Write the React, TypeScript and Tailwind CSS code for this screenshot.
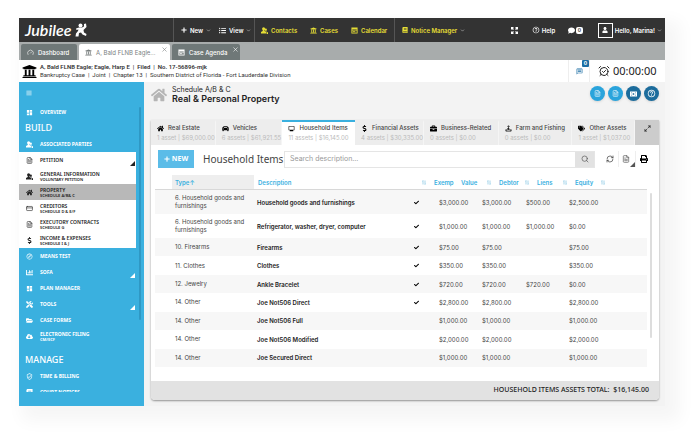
import React from "react";

import clsx from "clsx";
import {
  FaBars,
  FaBook,
  FaBriefcase,
  FaCalendarAlt,
  FaCar,
  FaCheck,
  FaChartBar,
  FaCloudDownloadAlt,
  FaComment,
  FaDollarSign,
  FaFolderOpen,
  FaHome,
  FaListUl,
  FaPlus,
  FaPrint,
  FaTags,
  FaTools,
  FaUniversity,
  FaUser,
  FaUserFriends,
} from "react-icons/fa";
import {
  MdDashboard,
  MdOutlineExplore,
  MdOutlineHelpOutline,
  MdOutlineMessage,
  MdOutlineMonitor,
  MdOutlineVerifiedUser,
} from "react-icons/md";
import {
  AlarmClockCheck,
  ChevronDown,
  CreditCard,
  FileText,
  Gauge,
  Maximize2,
  RefreshCw,
  Search,
  X,
} from "lucide-react";

type Icon = React.ComponentType<{ className?: string }>;

type NavItem = {
  label: string;
  sub?: string;
  icon: Icon;
  more?: boolean;
  active?: boolean;
};

const Corner = () => (
  <svg viewBox="0 0 5 5" className="size-[5px]" fill="currentColor">
    <path d="M5 0v5H0z" />
  </svg>
);

// two people, the front one larger
const People = ({ className }: { className?: string }) => (
  <svg viewBox="0 0 16 16" className={className} fill="currentColor">
    <circle cx="6" cy="4" r="3.500" />
    <path d="M4 6h4v3l4 2.500V15H0v-3.500L4 9z" />
    <circle cx="11" cy="6" r="2.500" />
    <path d="M10 8h2.500v2.500L16 12.500V16h-3v-5l-3-1.500z" />
  </svg>
);

const Agenda = ({ className }: { className?: string }) => (
  <svg viewBox="0 0 16 16" className={className} fill="currentColor">
    <path fillRule="evenodd" d="M1 1h14v14H1zM3 5v1.500h10V5zM3 8v5h10V8z" />
    <path d="M4 9h5v1.200H4zM4 11h7v1.200H4z" />
  </svg>
);

const Sprout = ({ className }: { className?: string }) => (
  <svg viewBox="0 0 16 16" className={className} fill="none" stroke="currentColor" strokeWidth="1.500">
    <path d="M8 2v9M5.500 4 8 1.500 10.500 4M5 8h5M2 10v4h12v-4M2 12c3-2 9-2 12 0" />
  </svg>
);

const buildTop: NavItem[] = [{ label: "ASSOCIATED PARTIES", icon: People }];

const petition: NavItem[] = [
  { label: "PETITION", icon: FileText, more: true },
  { label: "GENERAL INFORMATION", sub: "VOLUNTARY PETITION", icon: People },
  { label: "PROPERTY", sub: "SCHEDULE A/B& C", icon: FaHome, active: true },
  { label: "CREDITORS", sub: "SCHEDULE D & E/F", icon: CreditCard },
  { label: "EXECUTORY CONTRACTS", sub: "SCHEDULE G", icon: FileText },
  { label: "INCOME & EXPENSES", sub: "SCHEDULE I & J", icon: FaDollarSign },
];

const buildBottom: NavItem[] = [
  { label: "MEANS TEST", icon: MdOutlineExplore },
  { label: "SOFA", icon: FaChartBar, more: true },
  { label: "PLAN MANAGER", icon: MdDashboard },
  { label: "TOOLS", icon: FaTools, more: true },
  { label: "CASE FORMS", icon: FaFolderOpen },
  { label: "ELECTRONIC FILING", sub: "CM/ECF", icon: FaCloudDownloadAlt },
];

const manage: NavItem[] = [
  { label: "TIME & BILLING", icon: MdOutlineVerifiedUser },
  { label: "COURT NOTICES", icon: FaBook },
];

const assetTabs: { label: string; info: string; icon: Icon; active?: boolean }[] = [
  { label: "Real Estate", info: "1 asset | $69,000.00", icon: FaHome },
  { label: "Vehicles", info: "6 assets | $61,921.55", icon: FaCar },
  { label: "Household Items", info: "11 assets | $16,145.00", icon: MdOutlineMonitor, active: true },
  { label: "Financial Assets", info: "4 assets | $30,335.00", icon: FaDollarSign },
  { label: "Business-Related", info: "0 assets | $0.00", icon: FaBriefcase },
  { label: "Farm and Fishing", info: "0 assets | $0.00", icon: Sprout },
  { label: "Other Assets", info: "1 asset | $1,037.00", icon: FaTags },
];

const rows = [
  { type: "6. Household goods and furnishings", desc: "Household goods and furnishings", exempt: true, values: ["$3,000.00", "$3,000.00", "$500.00", "$2,500.00"] },
  { type: "6. Household goods and furnishings", desc: "Refrigerator, washer, dryer, computer", exempt: true, values: ["$1,000.00", "$1,000.00", "$1,000.00", "$0.00"] },
  { type: "10. Firearms", desc: "Firearms", exempt: true, values: ["$75.00", "$75.00", "", "$75.00"] },
  { type: "11. Clothes", desc: "Clothes", exempt: true, values: ["$350.00", "$350.00", "", "$350.00"] },
  { type: "12. Jewelry", desc: "Ankle Bracelet", exempt: true, values: ["$720.00", "$720.00", "$720.00", "$0.00"] },
  { type: "14. Other", desc: "Joe Not506 Direct", exempt: true, values: ["$2,800.00", "$2,800.00", "", "$2,800.00"] },
  { type: "14. Other", desc: "Joe Not506 Full", exempt: false, values: ["$1,000.00", "$1,000.00", "", "$1,000.00"] },
  { type: "14. Other", desc: "Joe Not506 Modified", exempt: false, values: ["$2,000.00", "$2,000.00", "", "$2,000.00"] },
  { type: "14. Other", desc: "Joe Secured Direct", exempt: false, values: ["$1,000.00", "$1,000.00", "", "$1,000.00"] },
];

const Logo = () => (
  <a href="#" className="flex w-[154px] items-center gap-1 pl-[6px] text-white">
    <span className="font-['Lato'] text-[16px] leading-none font-semibold italic">Jubilee</span>
    <svg viewBox="0 0 24 28" className="h-[14px] w-[12px]" fill="currentColor">
      <circle cx="11" cy="5" r="4" />
      <path d="M8 9h6l4-2V2l4-1 1 7-6 6 1 5 5 3-1 4-7-3-3-4-4 1-1 7H1l1-6 4-5 1-3-4 1-1-3z" />
    </svg>
  </a>
);

const TopBar = () => (
  <header className="flex h-6 items-stretch bg-[#333333] text-[6px] font-semibold text-white">
    <Logo />
    <nav className="flex items-stretch">
      <div className="flex items-center border-l border-[#555555]">
        <button className="flex w-[43px] items-center gap-[3px] pl-[7px]">
          <FaPlus className="size-[6px]" /> New <ChevronDown className="size-[5px]" />
        </button>
        <button className="flex w-[37px] items-center gap-[3px] pl-[2px]">
          <FaListUl className="size-[7px]" /> View <ChevronDown className="size-[5px]" />
        </button>
      </div>
      <div className="flex items-center border-l border-[#555555] text-[#e6de35]">
        <a href="#" className="flex w-[49px] items-center gap-[3px] pl-[6px]">
          <People className="size-[7px]" /> Contacts
        </a>
        <a href="#" className="flex w-[41px] items-center gap-[3px] pl-[6px]">
          <FaUniversity className="size-[7px]" /> Cases
        </a>
        <a href="#" className="flex w-[49px] items-center gap-[3px] pl-[6px]">
          <Agenda className="size-[7px]" /> Calendar
        </a>
      </div>
      <div className="flex items-center border-l border-[#555555] text-[#e6de35]">
        <button className="flex items-center gap-[3px] pl-[7px]">
          <FaBook className="size-[6px]" /> Notice Manager
          <ChevronDown className="size-[5px] text-white" />
        </button>
      </div>
    </nav>
    <div className="ml-auto flex items-center pr-[3px]">
      <button className="w-[21px]" aria-label="Full screen">
        <svg viewBox="0 0 14 14" className="size-[7px]" fill="none" stroke="currentColor" strokeWidth="2.400">
          <path d="M1 5V1h4M9 1h4v4M13 9v4H9M5 13H1V9M5 5 1 1M9 5l4-4M9 9l4 4M5 9l-4 4" />
        </svg>
      </button>
      <button className="flex w-9 items-center gap-[2px]">
        <MdOutlineHelpOutline className="size-[8px]" /> Help
      </button>
      <button className="flex w-[30px] items-center gap-[1px]" aria-label="Messages">
        <FaComment className="size-[7px]" />
        <span className="rounded-[2px] bg-white px-[2px] text-[5px] leading-[7px] text-[#333333]">0</span>
      </button>
      <button className="flex items-center gap-[2px]">
        <span className="flex size-[15px] items-center justify-center border border-white">
          <FaUser className="size-[6px]" />
        </span>
        Hello, Marina!
        <ChevronDown className="size-[5px]" />
      </button>
    </div>
  </header>
);

const CaseTabs = () => (
  <nav className="flex h-[18px] items-end gap-[2px] bg-[#a8acac] px-[2px] text-[6px] whitespace-nowrap text-white">
    <a href="#" className="flex h-4 w-14 items-center gap-1 rounded-t-[2px] bg-[#6f7878] pl-[6px] font-medium">
      <Gauge className="size-[7px]" /> Dashboard
    </a>
    <a href="#" className="flex h-4 w-[91px] items-center gap-1 rounded-t-[2px] bg-white pl-[6px] text-[#7a8080]">
      <FaUniversity className="size-[7px]" /> A, Bald FLNB Eagle...
      <X className="mr-[2px] mb-[5px] ml-auto size-[7px]" />
    </a>
    <a href="#" className="flex h-4 w-[68px] items-center gap-1 rounded-t-[2px] bg-[#6f7878] pl-[6px] font-medium">
      <Agenda className="size-[7px] shrink-0" /> Case Agenda
      <X className="mr-[1px] mb-[5px] ml-auto size-[7px] shrink-0" />
    </a>
  </nav>
);

const CaseInfo = () => (
  <div className="flex h-[22px] items-center bg-white pl-[3px] text-[#333333]">
    <FaUniversity className="size-[15px] text-black" />
    <div className="ml-[3px] font-['Roboto'] text-[6px] leading-[8px] whitespace-pre">
      <p className="font-semibold">A, Bald FLNB Eagle; Eagle, Harp E  |  Filed  |  No. 17-56896-mjk</p>
      <p>Bankruptcy Case  |  Joint  |  Chapter 13  |  Southern District of Florida - Fort Lauderdale Division</p>
    </div>
    <button className="relative ml-auto flex h-full w-[22px] items-center justify-center border-x border-[#eeeeee] text-[#1c6ea4]" aria-label="Notes">
      <MdOutlineMessage className="size-[7px]" />
      <span className="absolute top-0 right-0 rounded-[1px] bg-[#1c6ea4] px-[2px] text-[5px] leading-[7px] font-bold text-white">0</span>
    </button>
    <p className="flex w-[75px] items-center gap-[3px] pl-2 font-['Noto_Sans'] text-[11px] text-[#222222]">
      <AlarmClockCheck className="size-[12px]" /> 00:00:00
    </p>
  </div>
);

const NavRow = ({ item }: { item: NavItem }) => (
  <li className={clsx("h-4", item.active && "bg-[#b8b8b8]")}>
    <a href="#" className="flex h-full items-center pl-[7px]">
      <item.icon className="size-[7px]" />
      <span className="ml-[7px] leading-[6px]">
        <span className="block">{item.label}</span>
        {item.sub && <span className="block text-[4px] leading-[5px]">{item.sub}</span>}
      </span>
      {item.more && (
        <span className="mt-[6px] ml-auto pr-[1px]">
          <Corner />
        </span>
      )}
    </a>
  </li>
);

const NavList = ({ items, className }: { items: NavItem[]; className?: string }) => (
  <ul className={className}>
    {items.map((item) => (
      <NavRow key={item.label} item={item} />
    ))}
  </ul>
);

const Sidebar = () => (
  <aside className="w-[125px] shrink-0 bg-[#3ab0df] pb-[13px] font-['Noto_Sans'] text-[5px] font-bold text-white">
    <button className="flex h-[22px] items-center pl-[7px]" aria-label="Menu">
      <FaBars className="size-[6px] opacity-80" />
    </button>
    <div className="flex h-[288px] items-start gap-[3px] overflow-hidden">
      <div className="w-[117px]">
        <NavList items={[{ label: "OVERVIEW", icon: MdDashboard }]} />
        <h2 className="pl-[6px] text-[9px] leading-4 font-medium">BUILD</h2>
        <NavList items={buildTop} />
        <NavList items={petition} className="bg-white font-semibold text-[#222222]" />
        <NavList items={buildBottom} />
        <h2 className="pt-2 pl-[6px] text-[9px] leading-4 font-medium">MANAGE</h2>
        <NavList items={manage} />
      </div>
      <div className="mt-[3px] h-[213px] w-[2px] rounded-full bg-[#2f98c4]" />
    </div>
  </aside>
);

const RoundButton = ({ label, className, children }: { label: string; className: string; children: React.ReactNode }) => (
  <button aria-label={label} className={clsx("flex size-[15px] items-center justify-center rounded-full text-white shadow-sm", className)}>
    {children}
  </button>
);

const PageHeader = () => (
  <div className="flex h-[38px] items-start pt-1">
    <FaHome className="mt-[1px] size-[16px] text-[#b5b5b5]" />
    <div className="ml-[5px] text-[#222222]">
      <p className="text-[7px] leading-[8px]">Schedule A/B &amp; C</p>
      <h1 className="text-[9px] leading-[9px] font-semibold">Real &amp; Personal Property</h1>
    </div>
    <div className="ml-auto flex gap-[3px]">
      <RoundButton label="Export" className="bg-[#2aa4dc]">
        <FileText className="size-[7px]" />
      </RoundButton>
      <RoundButton label="Forms" className="bg-[#2aa4dc]">
        <FileText className="size-[7px]" />
      </RoundButton>
      <RoundButton label="Videos" className="bg-[#1c6c9c]">
        <svg viewBox="0 0 14 12" className="h-[6px] w-[7px]" fill="currentColor">
          <path fillRule="evenodd" d="M0 1h14v10H0zM2 3v1.500h1.500V3zM2 7.500V9h1.500V7.500zM10.500 3v1.500H12V3zM10.500 7.500V9H12V7.500zM5.500 3.500v5l4-2.500z" />
        </svg>
      </RoundButton>
      <RoundButton label="Help" className="bg-[#1c6c9c]">
        <MdOutlineHelpOutline className="size-[9px]" />
      </RoundButton>
    </div>
  </div>
);

const AssetTabs = () => (
  <div className="grid h-[25px] grid-cols-[63fr_67fr_73fr_69fr_75fr_74fr_63fr_24fr] bg-[#ededed]">
    {assetTabs.map((tab) => (
      <button
        key={tab.label}
        className={clsx(
          "flex flex-col border-t-2 pt-[1px] pl-[6px] text-left text-[6px] leading-[10px] whitespace-nowrap",
          tab.active ? "border-[#3ab0df] bg-white" : "border-r border-t-transparent border-r-[#f5f5f5]"
        )}
      >
        <span className="flex items-center gap-1 font-medium text-[#444444]">
          <tab.icon className="size-[7px] text-black" /> {tab.label}
        </span>
        <span className="text-[#bbbbbb]">{tab.info}</span>
      </button>
    ))}
    <button className="flex justify-center bg-[#cccccc] pt-[5px]" aria-label="Expand">
      <Maximize2 className="size-[7px]" />
    </button>
  </div>
);

const Toolbar = () => (
  <div className="flex h-[30px] items-center pr-[11px] pb-[2px] pl-[7px]">
    <button className="flex h-[18px] w-9 items-center justify-center gap-[2px] bg-[#5bbce8] font-['Noto_Sans'] text-[7px] font-bold text-white">
      <FaPlus className="size-[6px]" /> NEW
    </button>
    <h2 className="w-[90px] pl-[9px] font-['Noto_Sans'] text-[10px] whitespace-nowrap text-[#444444]">
      Household Items
    </h2>
    <div className="flex h-[17px] flex-1 border border-[#e5e5e5]">
      <input
        aria-label="Search description"
        placeholder="Search description..."
        className="min-w-0 flex-1 pl-[5px] text-[7px] outline-none placeholder:text-[#999999]"
      />
      <button className="flex w-[19px] items-center justify-center bg-[#e2e2e2]" aria-label="Search">
        <Search className="size-[8px] text-[#555555]" />
      </button>
    </div>
    <div className="ml-[11px] flex h-4 items-center text-[#333333]">
      <button className="w-3" aria-label="Refresh">
        <RefreshCw className="size-[8px]" />
      </button>
      <button className="flex h-full w-[18px] items-center justify-between border-x border-[#eeeeee] pl-[3px] text-[#555555]" aria-label="Export">
        <FileText className="size-[8px]" />
        <span className="self-end">
          <Corner />
        </span>
      </button>
      <button className="pl-1" aria-label="Print">
        <FaPrint className="size-[8px] text-black" />
      </button>
    </div>
  </div>
);

const SortMark = () => (
  <svg viewBox="0 0 8 10" className="h-[5px] w-[4px]" fill="none" stroke="#8cc8e4" strokeWidth="1.500">
    <path d="M2 9V1M.500 3 2 1M6 1v8M7.500 7 6 9" />
  </svg>
);

const AssetTable = () => (
  <div className="flex pl-1">
    <table className="block flex-1 text-[6px] text-[#444444]">
      <thead className="block border-b border-[#d8d8d8]">
        <tr className="grid h-[14px] grid-cols-[17px_82px_1fr_27px_38px_38px_38px_72px] items-center text-left text-[#3ab0df] *:font-semibold">
          <td />
          <th className="flex h-full items-center bg-[#eeeeee] pl-[3px]">Type↑</th>
          <th className="flex items-center justify-between pr-[8px] pl-1">
            Description <SortMark />
          </th>
          <th>Exemp</th>
          <th className="flex items-center justify-between pr-[8px]">
            Value <SortMark />
          </th>
          <th className="flex items-center justify-between pr-[8px]">
            Debtor <SortMark />
          </th>
          <th className="flex items-center justify-between pr-[8px]">
            Liens <SortMark />
          </th>
          <th className="flex items-center gap-[8px]">
            Equity <SortMark />
          </th>
        </tr>
      </thead>
      <tbody className="flex h-[177px] flex-col">
        {rows.map((row, index) => (
          <tr
            key={index}
            className={clsx(
              "grid grid-cols-[20px_82px_1fr_25px_43px_44px_43px_78px] items-center",
              index < 2 ? "h-6" : "flex-1",
              index % 2 === 0 && "bg-[#f7f7f7]"
            )}
          >
            <td />
            <td className="pr-3 leading-[8px]">{row.type}</td>
            <td className="font-semibold text-[#222222]">{row.desc}</td>
            <td>{row.exempt && <FaCheck className="size-[5px] text-black" />}</td>
            {row.values.map((value, i) => (
              <td key={i}>{value}</td>
            ))}
          </tr>
        ))}
      </tbody>
    </table>
    <div className="mt-[18px] mr-[7px] ml-[3px] h-[145px] w-[2px] rounded-full bg-[#dddddd]" />
  </div>
);

const App = () => {
  return (
    <div className="min-h-screen bg-white py-[18px] pr-[35px] pl-[19px] font-['Inter',sans-serif]">
      <div className="shadow-[9px_9px_16px_6px_rgba(0,0,0,0.04)]">
        <TopBar />
        <CaseTabs />
        <CaseInfo />
        <div className="flex">
          <Sidebar />
          <main className="min-w-0 flex-1 bg-[#f3f3f3] pr-[6px] pb-[6px] pl-[7px]">
            <PageHeader />
            <section className="overflow-hidden rounded-b-[4px] bg-white shadow-[0_1px_2px_rgba(0,0,0,0.4)]">
              <AssetTabs />
              <Toolbar />
              <AssetTable />
              <footer className="mt-[14px] flex h-[19px] items-center justify-end bg-[#e2e2e2] pr-[10px] font-['Noto_Sans'] text-[7px] font-medium whitespace-pre text-[#222222]">
                HOUSEHOLD ITEMS ASSETS TOTAL:  $16,145.00
              </footer>
            </section>
          </main>
        </div>
      </div>
    </div>
  );
};

export default App;
